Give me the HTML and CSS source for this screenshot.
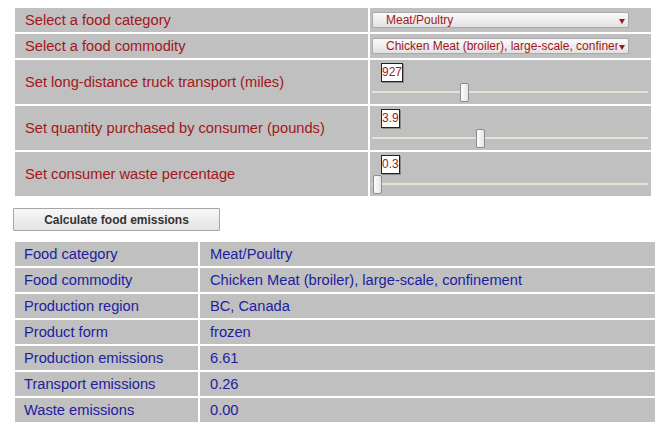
FILE: index.html
```html
<!DOCTYPE html>
<html lang="en">

<head>
  <meta charset="UTF-8">
  <meta name="viewport" content="width=device-width, initial-scale=1.0">
  <title>Food emissions calculator</title>

  <link rel="stylesheet" href="styles.css">
</head>

<body>

  <!-- inputs -->
  <table class="inputs">
    <tr class="row-short">
      <td class="label">Select a food category</td>
      <td class="control">
        <span class="select-box">
          <select id="category">
            <option>Meat/Poultry</option>
            <option>Dairy</option>
            <option>Vegetables</option>
          </select>
        </span>
      </td>
    </tr>
    <tr class="row-short">
      <td class="label">Select a food commodity</td>
      <td class="control">
        <span class="select-box">
          <select id="commodity">
            <option>Chicken Meat (broiler), large-scale, confinement</option>
          </select>
        </span>
      </td>
    </tr>
    <tr class="row-tall">
      <td class="label">Set long-distance truck transport (miles)</td>
      <td class="control slider-cell">
        <span class="value" id="miles-out">927</span>
        <input type="range" id="miles" min="0" max="2800" value="927">
      </td>
    </tr>
    <tr class="row-tall">
      <td class="label">Set quantity purchased by consumer (pounds)</td>
      <td class="control slider-cell">
        <span class="value" id="pounds-out">3.9</span>
        <input type="range" id="pounds" min="0" max="10" step="0.1" value="3.9">
      </td>
    </tr>
    <tr class="row-tall">
      <td class="label">Set consumer waste percentage</td>
      <td class="control slider-cell">
        <span class="value" id="waste-out">0.3</span>
        <input type="range" id="waste" min="0" max="100" step="0.1" value="0.3">
      </td>
    </tr>
  </table>

  <div class="actions">
    <button class="calc-btn" type="button">Calculate food emissions</button>
  </div>

  <!-- results -->
  <table class="results">
    <tr><td class="key">Food category</td><td class="val">Meat/Poultry</td></tr>
    <tr><td class="key">Food commodity</td><td class="val">Chicken Meat (broiler), large-scale, confinement</td></tr>
    <tr><td class="key">Production region</td><td class="val">BC, Canada</td></tr>
    <tr><td class="key">Product form</td><td class="val">frozen</td></tr>
    <tr><td class="key">Production emissions</td><td class="val">6.61</td></tr>
    <tr><td class="key">Transport emissions</td><td class="val">0.26</td></tr>
    <tr><td class="key">Waste emissions</td><td class="val">0.00</td></tr>
  </table>

  <script>
    // keep the number boxes in step with the sliders
    document.querySelectorAll("input[type=range]").forEach((slider) => {
      slider.addEventListener("input", () => {
        document.getElementById(slider.id + "-out").textContent = slider.value;
      });
    });
  </script>
</body>

</html>
```

FILE: styles.css
```css
body {
  margin: 0;
  padding: 6px 0 0 13px;
  font-family: "Liberation Sans", Arial, sans-serif;
}

table {
  border-collapse: separate;
  border-spacing: 2px;
  table-layout: fixed;
}

td {
  background: #c0c0c0;
  padding: 0;
  box-sizing: border-box;
}

/* input table */
.inputs {
  width: 640px;
}

.inputs .label {
  width: 353px;
  padding-left: 10px;
  color: #a3161a;
  font-size: 11pt;
  vertical-align: middle;
}

.row-short td {
  height: 24px;
}

.row-tall td {
  height: 44px;
}

.select-box {
  position: relative;
  display: block;
  width: 257px;
  height: 16px;
  margin-left: 2px;
}

.select-box select {
  -webkit-appearance: none;
  appearance: none;
  display: block;
  width: 100%;
  height: 100%;
  margin: 0;
  padding: 0 10px 0 13px;
  border: 1px solid #a9a9a9;
  border-radius: 2px;
  background: linear-gradient(#fbfbfb, #e1e1e1);
  color: #a3161a;
  font-family: inherit;
  font-size: 12px;
  line-height: 14px;
  white-space: nowrap;
  overflow: hidden;
}

/* little arrow on the right */
.select-box::after {
  content: "";
  position: absolute;
  right: 4px;
  top: 7px;
  border-left: 3px solid transparent;
  border-right: 3px solid transparent;
  border-top: 5px solid #a3161a;
  pointer-events: none;
}

.slider-cell {
  vertical-align: top;
  padding-top: 3px;
}

.value {
  display: inline-block;
  margin-left: 11px;
  border: 1px solid #222;
  box-shadow: 1px 1px 0 #8a8a8a;
  background: #fff;
  color: #a3161a;
  font-size: 12px;
  line-height: 17px;
  vertical-align: top;
}

input[type=range] {
  -webkit-appearance: none;
  appearance: none;
  display: block;
  width: 276px;
  height: 20px;
  margin: 0 0 0 2px;
  background: transparent;
}

input[type=range]::-webkit-slider-runnable-track {
  height: 2px;
  background: #e4e4d4;
}

input[type=range]::-webkit-slider-thumb {
  -webkit-appearance: none;
  width: 9px;
  height: 19px;
  margin-top: -8.5px;
  border: 1px solid #8c8c8c;
  border-radius: 2px;
  box-sizing: border-box;
  background: linear-gradient(to right, #fdfdfd, #e6e6e6);
}

/* button */
.actions {
  margin-top: 10px;
}

.calc-btn {
  display: block;
  width: 207px;
  height: 23px;
  margin: 0;
  padding: 0;
  border: 1px solid #a6a6a6;
  border-radius: 1px;
  background: linear-gradient(#f7f7f7, #e3e3e3);
  color: #333;
  font-family: inherit;
  font-size: 12px;
  font-weight: bold;
}

/* results table */
.results {
  width: 644px;
  margin-top: 9px;
}

.results td {
  height: 24px;
  color: #1d1d9f;
  font-size: 11pt;
  vertical-align: middle;
}

.results .key {
  width: 183px;
  padding-left: 9px;
}

.results .val {
  padding-left: 10px;
}
```
